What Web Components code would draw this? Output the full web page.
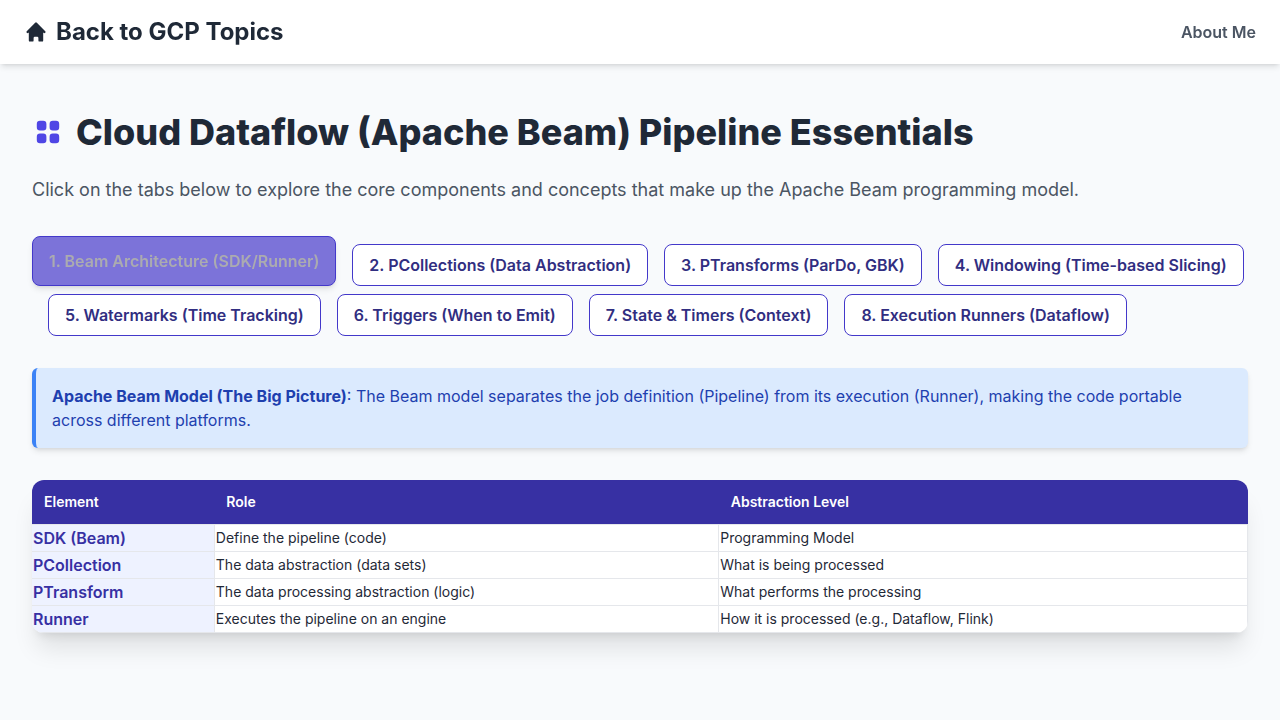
<!DOCTYPE html>
<html lang="en">
<head>
<meta charset="utf-8">
<meta name="viewport" content="width=device-width, initial-scale=1">
<title>Cloud Dataflow (Apache Beam) Pipeline Essentials</title>
<style>
  html { background: #f8fafc; }
  body { margin: 0; font: 16px/24px Inter, "Liberation Sans", sans-serif; color: #1f2937; }
  main { display: flex; flex-direction: column; gap: 32px; padding: 40px 32px; }
</style>
</head>
<body>
<site-header></site-header>
<main>
  <page-intro>
    <span slot="title">Cloud Dataflow (Apache Beam) Pipeline Essentials</span>
    <span slot="lead">Click on the tabs below to explore the core components and concepts that make up the Apache Beam programming model.</span>
  </page-intro>
  <topic-tabs>
    <topic-tab active>1. Beam Architecture (SDK/Runner)</topic-tab>
    <topic-tab>2. PCollections (Data Abstraction)</topic-tab>
    <topic-tab>3. PTransforms (ParDo, GBK)</topic-tab>
    <topic-tab>4. Windowing (Time-based Slicing)</topic-tab>
    <topic-tab>5. Watermarks (Time Tracking)</topic-tab>
    <topic-tab>6. Triggers (When to Emit)</topic-tab>
    <topic-tab>7. State &amp; Timers (Context)</topic-tab>
    <topic-tab>8. Execution Runners (Dataflow)</topic-tab>
  </topic-tabs>
  <info-note><strong>Apache Beam Model (The Big Picture)</strong>: The Beam model separates the job definition (Pipeline) from its execution (Runner), making the code portable across different platforms.</info-note>
  <beam-table></beam-table>
</main>
<script>
const define = (name, html, init) => {
  const template = document.createElement('template');
  template.innerHTML = html;
  customElements.define(name, class extends HTMLElement {
    constructor() {
      super();
      this.attachShadow({ mode: 'open' }).append(template.content.cloneNode(true));
    }
    connectedCallback() { if (init) init(this, this.shadowRoot); }
  });
};

define('site-header', `
<style>
  :host { display: block; position: sticky; top: 0; z-index: 10; background: #fff;
    box-shadow: 0 4px 6px -1px rgb(0 0 0 / .1), 0 2px 4px -2px rgb(0 0 0 / .1); will-change: transform; }
  header { display: flex; align-items: center; justify-content: space-between; padding: 16px 24px; }
  a { text-decoration: none; }
  .home { display: flex; align-items: center; gap: 8px; font-size: 24px; line-height: 32px; font-weight: 700; color: #1f2937; }
  .about { font-weight: 600; color: #4b5563; }
  svg { width: 24px; height: 24px; display: block; }
</style>
<header>
  <a class="home" href="#home"><svg viewBox="0 0 20 20" fill="currentColor" aria-hidden="true"><path d="M10.707 2.293a1 1 0 00-1.414 0l-7 7a1 1 0 001.414 1.414L4 10.414V17a1 1 0 001 1h2a1 1 0 001-1v-2a1 1 0 011-1h2a1 1 0 011 1v2a1 1 0 001 1h2a1 1 0 001-1v-6.586l.293.293a1 1 0 001.414-1.414l-7-7z"/></svg>Back to GCP Topics</a>
  <a class="about" href="#about">About Me</a>
</header>`);

define('page-intro', `
<style>
  :host { display: block; }
  h1 { display: flex; align-items: center; gap: 12px; margin: 8px 0 24px; font-size: 36px; line-height: 40px; font-weight: 800; color: #1f2937; }
  svg { width: 32px; height: 32px; flex: none; color: #4f46e5; }
  p { margin: 0; font-size: 18px; line-height: 28px; color: #4b5563; }
</style>
<h1><svg viewBox="0 0 20 20" fill="currentColor" aria-hidden="true"><path d="M5 3a2 2 0 00-2 2v2a2 2 0 002 2h2a2 2 0 002-2V5a2 2 0 00-2-2H5zM5 11a2 2 0 00-2 2v2a2 2 0 002 2h2a2 2 0 002-2v-2a2 2 0 00-2-2H5zM11 5a2 2 0 012-2h2a2 2 0 012 2v2a2 2 0 01-2 2h-2a2 2 0 01-2-2V5zM11 13a2 2 0 012-2h2a2 2 0 012 2v2a2 2 0 01-2 2h-2a2 2 0 01-2-2v-2z"/></svg><slot name="title"></slot></h1>
<p><slot name="lead"></slot></p>`);

define('topic-tabs', `
<style>
  :host { display: flex; flex-wrap: wrap; }
  ::slotted(:not(:first-child)) { margin: 8px 0 0 16px; }
</style>
<slot></slot>`);

define('topic-tab', `
<style>
  :host { display: flex; }
  button { font: inherit; font-weight: 600; padding: 8px 16px; border: 1px solid #4338ca; border-radius: 8px;
    background: #fff; color: #312e81; cursor: pointer; }
  :host([active]) button { background: #7c73d9; color: #ababb0; cursor: default;
    box-shadow: 0 4px 6px -1px rgb(0 0 0 / .1), 0 2px 4px -2px rgb(0 0 0 / .1); will-change: transform; }
</style>
<button type="button"><slot></slot></button>`, (host, root) => {
  root.querySelector('button').onclick = () => {
    for (const tab of host.parentElement.children) tab.toggleAttribute('active', tab === host);
  };
});

define('info-note', `
<style>
  :host { display: block; padding: 16px; border-left: 4px solid #3b82f6; border-radius: 6px;
    background: #dbeafe; color: #1e40af;
    box-shadow: 0 4px 6px -1px rgb(0 0 0 / .1), 0 2px 4px -2px rgb(0 0 0 / .1); }
</style>
<slot></slot>`);

define('beam-table', `
<style>
  :host { display: block; overflow: hidden; border-radius: 12px; background: #fff;
    box-shadow: 0 20px 25px -5px rgb(0 0 0 / .1), 0 8px 10px -6px rgb(0 0 0 / .1); }
  table { width: 100%; border-collapse: collapse; font-size: 14px; line-height: 20px; }
  .element { width: 15%; }
  .role { width: 41.5%; }
  thead { background: #3730a3; color: #fff; }
  thead th { padding: 12px; font-weight: 600; text-align: left; }
  tbody th { padding: 1px; border: 1px solid #e5e7eb; border-left: 0; background: #eef2ff; color: #3730a3;
    font-size: 16px; line-height: 24px; font-weight: 600; text-align: left; }
  td { padding: 1px; border: 1px solid #e5e7eb; color: #1f2937; }
</style>
<table>
  <colgroup><col class="element"><col class="role"><col></colgroup>
  <thead><tr><th scope="col">Element</th><th scope="col">Role</th><th scope="col">Abstraction Level</th></tr></thead>
  <tbody>
    <tr><th scope="row">SDK (Beam)</th><td>Define the pipeline (code)</td><td>Programming Model</td></tr>
    <tr><th scope="row">PCollection</th><td>The data abstraction (data sets)</td><td>What is being processed</td></tr>
    <tr><th scope="row">PTransform</th><td>The data processing abstraction (logic)</td><td>What performs the processing</td></tr>
    <tr><th scope="row">Runner</th><td>Executes the pipeline on an engine</td><td>How it is processed (e.g., Dataflow, Flink)</td></tr>
  </tbody>
</table>`);
</script>
</body>
</html>
